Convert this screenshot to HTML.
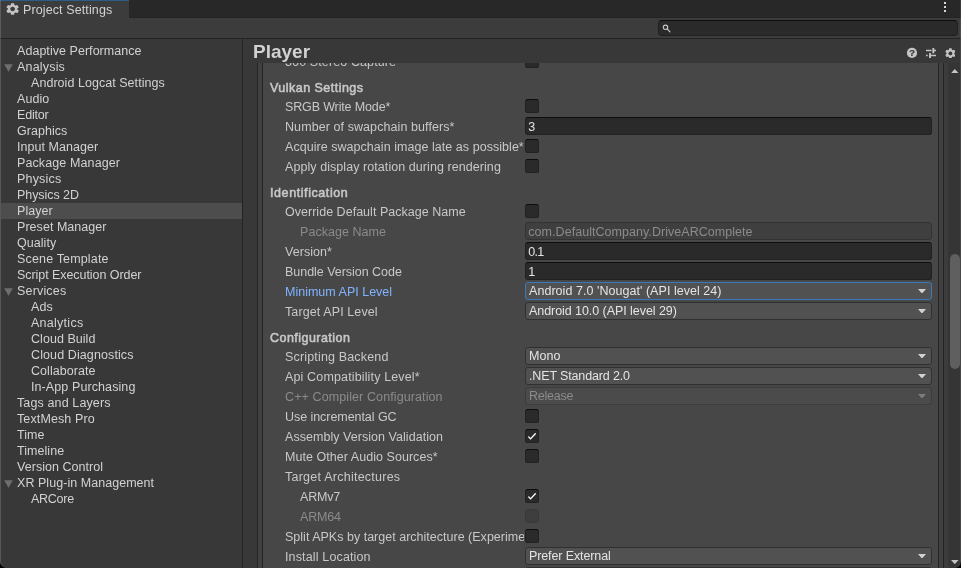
<!DOCTYPE html><html><head><meta charset='utf-8'><title>Project Settings</title><style>
*{box-sizing:border-box;margin:0;padding:0}
html,body{width:961px;height:568px;overflow:hidden;background:#000}
body{font-family:"Liberation Sans",sans-serif;font-size:12.5px;letter-spacing:0.045px;color:#d2d2d2;position:relative;-webkit-font-smoothing:antialiased}
.a{position:absolute}
.t{position:absolute;white-space:nowrap;line-height:16px;height:16px}
.win{will-change:transform;left:0;top:0;width:961px;height:568px;background:#383838;border-bottom-left-radius:7px;border-bottom-right-radius:7px;overflow:hidden}
.tabbar{left:0;top:0;width:961px;height:18px;background:#282828;border-bottom:1px solid #242424}
.tab{left:0;top:0;width:129px;height:18px;background:#3c3c3c;border-top:1px solid #2c5d87}
.toolbar{left:0;top:18px;width:961px;height:21px;background:#3c3c3c;border-bottom:1px solid #232323}
.search{left:658px;top:20px;width:300px;height:16px;background:#2a2a2a;border:1px solid #212121;border-top-color:#0d0d0d;border-radius:4px}
.left{left:0;top:39px;width:242px;height:529px;background:#383838}
.split{left:242px;top:39px;width:1px;height:529px;background:#232323}
.sel{left:1px;top:203px;width:241px;height:16px;background:#4d4d4d}
.lb{left:0;top:0;width:961px;height:568px;border-left:1px solid rgba(255,255,255,0.16);border-right:1px solid rgba(255,255,255,0.085);border-bottom-left-radius:7px;border-bottom-right-radius:7px}
.box1{left:257px;top:39px;width:687px;height:540px;border-left:1px solid #232323;border-right:1px solid #242424;background:#414141}
.box2{left:262px;top:39px;width:677px;height:540px;border-left:1px solid #232323;border-right:1px solid #242424;background:#474747}
.hdr{left:243px;top:39px;width:717px;height:24px;background:#383838}
.title{left:253px;top:39.5px;font-size:19px;font-weight:bold;line-height:24px;height:24px;color:#d2d2d2;letter-spacing:0}
.sbtrack{left:948px;top:63px;width:12px;height:505px;background:#353535}
.sbthumb{left:950px;top:254px;width:10px;height:115px;background:#5f5f5f;border-radius:5px}
.cb{position:absolute;left:525px;width:14px;height:14px;background:#2a2a2a;border:1px solid #212121;border-top-color:#0d0d0d;border-radius:2.5px}
.cb.dis{background:#3e3e3e;border-color:#393939}
.tf{position:absolute;left:525px;width:407px;height:18px;background:#2a2a2a;border:1px solid #212121;border-top-color:#0d0d0d;border-radius:3px}
.tf.dis{background:#3f3f3f;border-color:#333333}
.dd{position:absolute;left:525px;width:407px;height:18px;background:#515151;border:1px solid #303030;border-radius:3px}
.dd.foc{border-color:#3a79bb}
.dd.dis{background:#4b4b4b;border-color:#3c3c3c}
.b{font-weight:normal;-webkit-text-stroke:0.55px #c8c8c8;color:#c8c8c8;letter-spacing:0.45px}
.lab{color:#c8c8c8}
.dim{color:#8b8b8b}
.val{color:#e4e4e4}
.blue{color:#81b4ff}
</style></head><body>
<div class='a win'>
<div class='a tabbar'></div><div class='a tab'></div>
<div class='a toolbar'></div><div class='a search'></div>
<svg class='a' style='left:662px;top:24px' width='10' height='10' viewBox='0 0 10 10'><circle cx='3.5' cy='3.3' r='2.2' fill='none' stroke='#c8c8c8' stroke-width='1.1'/><path d='M5.2 5 L8 7.8' stroke='#c8c8c8' stroke-width='1.1' stroke-linecap='round'/></svg>
<svg class='a' style='left:944px;top:2px' width='2' height='10' viewBox='0 0 2 10'><rect x='0' y='0' width='2' height='2' fill='#d8d8d8'/><rect x='0' y='4' width='2' height='2' fill='#d8d8d8'/><rect x='0' y='8' width='2' height='2' fill='#d8d8d8'/></svg>
<svg class='a' style='left:6.3px;top:2.9px' width='13.2' height='12.1' preserveAspectRatio='none' viewBox='2 2 20 20'><path fill='#c4c4c4' d='M19.14 12.94c.04-.3.06-.61.06-.94 0-.32-.02-.64-.07-.94l2.03-1.58a.49.49 0 0 0 .12-.61l-1.92-3.32a.488.488 0 0 0-.59-.22l-2.39.96c-.5-.38-1.03-.7-1.62-.94l-.36-2.54a.484.484 0 0 0-.48-.41h-3.84c-.24 0-.43.17-.47.41l-.36 2.54c-.59.24-1.13.57-1.62.94l-2.39-.96c-.22-.08-.47 0-.59.22L2.74 8.87c-.12.21-.08.47.12.61l2.03 1.58c-.05.3-.09.63-.09.94s.02.64.07.94l-2.03 1.58a.49.49 0 0 0-.12.61l1.92 3.32c.12.22.37.29.59.22l2.39-.96c.5.38 1.03.7 1.62.94l.36 2.54c.05.24.24.41.48.41h3.84c.24 0 .44-.17.47-.41l.36-2.54c.59-.24 1.13-.56 1.62-.94l2.39.96c.22.08.47 0 .59-.22l1.92-3.32c.12-.22.07-.47-.12-.61l-2.01-1.58zM12 15.6c-1.98 0-3.6-1.62-3.6-3.6s1.620-3.6 3.6-3.600 3.600 1.620 3.600 3.600-1.620 3.600-3.600 3.600z'/></svg>
<div class='t' style='left:23px;top:2px;color:#d2d2d2;letter-spacing:0.112px'>Project Settings</div>
<div class='a left'></div><div class='a sel'></div>
<div class='t' style='left:17px;top:43px'>Adaptive Performance</div>
<div class='t' style='left:17px;top:59px;letter-spacing:0.188px'>Analysis</div>
<svg class='a' style='left:4px;top:64px' width='9' height='8' viewBox='0 0 9 8'><path d='M0.2 0.2 L8.8 0.2 L4.5 7.8 Z' fill='#6e6e6e'/></svg>
<div class='t' style='left:31px;top:75px'>Android Logcat Settings</div>
<div class='t' style='left:17px;top:91px'>Audio</div>
<div class='t' style='left:17px;top:107px;letter-spacing:-0.195px'>Editor</div>
<div class='t' style='left:17px;top:123px'>Graphics</div>
<div class='t' style='left:17px;top:139px'>Input Manager</div>
<div class='t' style='left:17px;top:155px;letter-spacing:0.109px'>Package Manager</div>
<div class='t' style='left:17px;top:171px;letter-spacing:0.195px'>Physics</div>
<div class='t' style='left:17px;top:187px;letter-spacing:-0.066px'>Physics 2D</div>
<div class='t' style='left:17px;top:203px'>Player</div>
<div class='t' style='left:17px;top:219px'>Preset Manager</div>
<div class='t' style='left:17px;top:235px'>Quality</div>
<div class='t' style='left:17px;top:251px;letter-spacing:0.160px'>Scene Template</div>
<div class='t' style='left:17px;top:267px;letter-spacing:-0.060px'>Script Execution Order</div>
<div class='t' style='left:17px;top:283px;letter-spacing:0.174px'>Services</div>
<svg class='a' style='left:4px;top:288px' width='9' height='8' viewBox='0 0 9 8'><path d='M0.2 0.2 L8.8 0.2 L4.5 7.8 Z' fill='#6e6e6e'/></svg>
<div class='t' style='left:31px;top:299px'>Ads</div>
<div class='t' style='left:31px;top:315px;letter-spacing:0.270px'>Analytics</div>
<div class='t' style='left:31px;top:331px'>Cloud Build</div>
<div class='t' style='left:31px;top:347px;letter-spacing:0.107px'>Cloud Diagnostics</div>
<div class='t' style='left:31px;top:363px'>Collaborate</div>
<div class='t' style='left:31px;top:379px;letter-spacing:0.095px'>In-App Purchasing</div>
<div class='t' style='left:17px;top:395px;letter-spacing:0.124px'>Tags and Layers</div>
<div class='t' style='left:17px;top:411px;letter-spacing:0.118px'>TextMesh Pro</div>
<div class='t' style='left:17px;top:427px'>Time</div>
<div class='t' style='left:17px;top:443px'>Timeline</div>
<div class='t' style='left:17px;top:459px'>Version Control</div>
<div class='t' style='left:17px;top:475px'>XR Plug-in Management</div>
<svg class='a' style='left:4px;top:480px' width='9' height='8' viewBox='0 0 9 8'><path d='M0.2 0.2 L8.8 0.2 L4.5 7.8 Z' fill='#6e6e6e'/></svg>
<div class='t' style='left:31px;top:491px;letter-spacing:-0.275px'>ARCore</div>
<div class='a split'></div>
<div class='a box1'></div><div class='a box2'></div>
<div class='t lab ' style='left:285px;top:54px;letter-spacing:0.116px'>360 Stereo Capture</div>
<div class='cb' style='top:54px'></div>
<div class='t lab b' style='left:270px;top:80px;letter-spacing:0.474px'>Vulkan Settings</div>
<div class='t lab ' style='left:285px;top:99px;letter-spacing:-0.142px'>SRGB Write Mode*</div>
<div class='cb' style='top:99px'></div>
<div class='t lab ' style='left:285px;top:119px;letter-spacing:0.082px'>Number of swapchain buffers*</div>
<div class='tf' style='top:117px'><div class='t val' style='left:2.3px;top:1px'>3</div></div>
<div class='t lab ' style='left:285px;top:139px'>Acquire swapchain image late as possible*</div>
<div class='cb' style='top:139px'></div>
<div class='t lab ' style='left:285px;top:159px;letter-spacing:0.066px'>Apply display rotation during rendering</div>
<div class='cb' style='top:159px'></div>
<div class='t lab b' style='left:270px;top:185px;letter-spacing:0.583px'>Identification</div>
<div class='t lab ' style='left:285px;top:204px;letter-spacing:0.024px'>Override Default Package Name</div>
<div class='cb' style='top:204px'></div>
<div class='t lab dim' style='left:300px;top:224px'>Package Name</div>
<div class='tf dis' style='top:222px'><div class='t dim' style='left:2.3px;top:1px'>com.DefaultCompany.DriveARComplete</div></div>
<div class='t lab ' style='left:285px;top:244px'>Version*</div>
<div class='tf' style='top:242px'><div class='t val' style='left:2.3px;top:1px;letter-spacing:-0.705px'>0.1</div></div>
<div class='t lab ' style='left:285px;top:264px;letter-spacing:-0.033px'>Bundle Version Code</div>
<div class='tf' style='top:262px'><div class='t val' style='left:2.3px;top:1px'>1</div></div>
<div class='t lab blue' style='left:285px;top:284px;letter-spacing:0.007px'>Minimum API Level</div>
<div class='dd foc' style='top:282px'><div class='t val' style='left:3px;top:0px'>Android 7.0 &#x27;Nougat&#x27; (API level 24)</div><svg class='a' style='right:5px;top:5.7px' width='8' height='4.6' viewBox='0 0 8 4.6'><path d='M0 0 L8 0 L4 4.6 Z' fill='#d2d2d2'/></svg></div>
<div class='t lab ' style='left:285px;top:304px;letter-spacing:0.105px'>Target API Level</div>
<div class='dd' style='top:302px'><div class='t val' style='left:3px;top:0px;letter-spacing:-0.059px'>Android 10.0 (API level 29)</div><svg class='a' style='right:5px;top:5.7px' width='8' height='4.6' viewBox='0 0 8 4.6'><path d='M0 0 L8 0 L4 4.6 Z' fill='#d2d2d2'/></svg></div>
<div class='t lab b' style='left:270px;top:330px;letter-spacing:0.462px'>Configuration</div>
<div class='t lab ' style='left:285px;top:349px;letter-spacing:0.164px'>Scripting Backend</div>
<div class='dd' style='top:347px'><div class='t val' style='left:3px;top:0px'>Mono</div><svg class='a' style='right:5px;top:5.7px' width='8' height='4.6' viewBox='0 0 8 4.6'><path d='M0 0 L8 0 L4 4.6 Z' fill='#d2d2d2'/></svg></div>
<div class='t lab ' style='left:285px;top:369px;letter-spacing:0.145px'>Api Compatibility Level*</div>
<div class='dd' style='top:367px'><div class='t val' style='left:3px;top:0px;letter-spacing:-0.143px'>.NET Standard 2.0</div><svg class='a' style='right:5px;top:5.7px' width='8' height='4.6' viewBox='0 0 8 4.6'><path d='M0 0 L8 0 L4 4.6 Z' fill='#d2d2d2'/></svg></div>
<div class='t lab dim' style='left:285px;top:389px;letter-spacing:0.105px'>C++ Compiler Configuration</div>
<div class='dd dis' style='top:387px'><div class='t dim' style='left:3px;top:0px;letter-spacing:-0.238px'>Release</div><svg class='a' style='right:5px;top:5.7px' width='8' height='4.6' viewBox='0 0 8 4.6'><path d='M0 0 L8 0 L4 4.6 Z' fill='#7d7d7d'/></svg></div>
<div class='t lab ' style='left:285px;top:409px;letter-spacing:-0.055px'>Use incremental GC</div>
<div class='cb' style='top:409px'></div>
<div class='t lab ' style='left:285px;top:429px'>Assembly Version Validation</div>
<div class='cb' style='top:429px'><svg class='a' style='left:-1px;top:-1px' width='14' height='14' viewBox='0 0 14 14'><path d='M3.7 7.9 L5.5 9.9 L10.3 4.7' fill='none' stroke='#ffffff' stroke-width='1.35' stroke-linecap='round' stroke-linejoin='round'/></svg></div>
<div class='t lab ' style='left:285px;top:449px'>Mute Other Audio Sources*</div>
<div class='cb' style='top:449px'></div>
<div class='t lab ' style='left:285px;top:469px;letter-spacing:0.245px'>Target Architectures</div>
<div class='t lab ' style='left:300px;top:489px;letter-spacing:-0.205px'>ARMv7</div>
<div class='cb' style='top:489px'><svg class='a' style='left:-1px;top:-1px' width='14' height='14' viewBox='0 0 14 14'><path d='M3.7 7.9 L5.5 9.9 L10.3 4.7' fill='none' stroke='#ffffff' stroke-width='1.35' stroke-linecap='round' stroke-linejoin='round'/></svg></div>
<div class='t lab dim' style='left:300px;top:509px;letter-spacing:-0.205px'>ARM64</div>
<div class='cb dis' style='top:509px'></div>
<div class='t lab ' style='left:285px;top:529px;width:238.5px;overflow:hidden;letter-spacing:0.011px'>Split APKs by target architecture (Experimental)</div>
<div class='cb' style='top:529px'></div>
<div class='t lab ' style='left:285px;top:549px;letter-spacing:0.145px'>Install Location</div>
<div class='dd' style='top:547px'><div class='t val' style='left:3px;top:0px;letter-spacing:-0.112px'>Prefer External</div><svg class='a' style='right:5px;top:5.7px' width='8' height='4.6' viewBox='0 0 8 4.6'><path d='M0 0 L8 0 L4 4.6 Z' fill='#d2d2d2'/></svg></div>
<div class='dd' style='top:567px'><div class='t val' style='left:3px;top:0px'></div><svg class='a' style='right:5px;top:5.7px' width='8' height='4.6' viewBox='0 0 8 4.6'><path d='M0 0 L8 0 L4 4.6 Z' fill='#d2d2d2'/></svg></div>
<div class='a hdr'></div><div class='t title'>Player</div>
<svg class='a' style='left:906px;top:47px' width='12' height='12' viewBox='0 0 12 12'><circle cx='6' cy='5.9' r='5.1' fill='#c4c4c4'/><text x='6' y='9.4' font-size='9.3' font-weight='bold' text-anchor='middle' fill='#383838' stroke='#383838' stroke-width='0.2' font-family='Liberation Sans'>?</text></svg>
<svg class='a' style='left:926px;top:48px' width='10' height='10' viewBox='0 0 10 10'><g stroke='#c4c4c4' fill='none'><path stroke-width='1.3' d='M0 2.5 H5.5 M8 2.5 H10 M0 7.5 H1.7 M5 7.5 H10'/><path stroke-width='1.9' d='M7.3 0 V5.2 M4 4.9 V10'/></g></svg>
<svg class='a' style='left:944.6px;top:47.6px' width='10.8' height='10.8' viewBox='2 2 20 20'><path fill='#c4c4c4' d='M19.14 12.94c.04-.3.06-.61.06-.94 0-.32-.02-.64-.07-.94l2.03-1.58a.49.49 0 0 0 .12-.61l-1.92-3.32a.488.488 0 0 0-.59-.22l-2.39.96c-.5-.38-1.03-.7-1.62-.94l-.36-2.54a.484.484 0 0 0-.48-.41h-3.84c-.24 0-.43.17-.47.41l-.36 2.54c-.59.24-1.13.57-1.62.94l-2.39-.96c-.22-.08-.47 0-.59.22L2.74 8.87c-.12.21-.08.47.12.61l2.03 1.58c-.05.3-.09.63-.09.94s.02.64.07.94l-2.03 1.58a.49.49 0 0 0-.12.61l1.92 3.32c.12.22.37.29.59.22l2.39-.96c.5.38 1.03.7 1.62.94l.36 2.54c.05.24.24.41.48.41h3.84c.24 0 .44-.17.47-.41l.36-2.54c.59-.24 1.13-.56 1.62-.94l2.39.96c.22.08.47 0 .59-.22l1.92-3.32c.12-.22.07-.47-.12-.61l-2.01-1.58zM12 15.6c-1.98 0-3.6-1.62-3.6-3.6s1.620-3.6 3.6-3.600 3.600 1.620 3.600 3.600-1.620 3.600-3.600 3.600z'/></svg>
<div class='a' style='left:944px;top:63px;width:4px;height:505px;background:#3c3c3c'></div><div class='a sbtrack'></div><div class='a sbthumb'></div>
<svg class='a' style='left:951.2px;top:69px' width='7.6' height='4.2' viewBox='0 0 8 5' preserveAspectRatio='none'><path d='M0 5 L8 5 L4 0 Z' fill='#c4c4c4'/></svg>
<svg class='a' style='left:951.2px;top:560px' width='7.6' height='4.2' viewBox='0 0 8 5' preserveAspectRatio='none'><path d='M0 0 L8 0 L4 5 Z' fill='#c4c4c4'/></svg>
<div class='a lb'></div>
</div></body></html>
